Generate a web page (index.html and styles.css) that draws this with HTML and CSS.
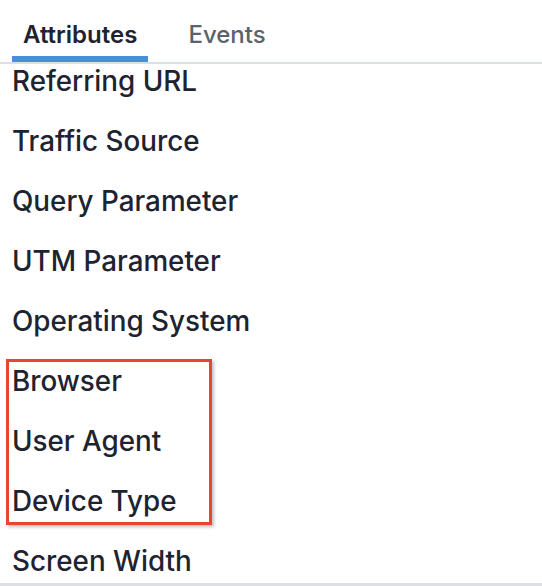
FILE: index.html
```html
<!DOCTYPE html>
<html>
<head>
<meta charset="utf-8">
<link rel="stylesheet" href="styles.css">
</head>
<body>
<div class="panel">
  <div class="tabs">
    <div class="tab active">Attributes</div>
    <div class="tab">Events</div>
  </div>
  <ul class="list">
    <li>Referring URL</li>
    <li>Traffic Source</li>
    <li>Query Parameter</li>
    <li>UTM Parameter</li>
    <li>Operating System</li>
    <li>Browser</li>
    <li>User Agent</li>
    <li>Device Type</li>
    <li>Screen Width</li>
  </ul>
  <div class="highlight"></div>
</div>
</body>
</html>
```
FILE: styles.css
```css
html, body {
  margin: 0;
  padding: 0;
  background: #ffffff;
}
body {
  font-family: Inter, "Noto Sans", sans-serif;
  color: #1e2330;
  width: 542px;
  height: 586px;
  overflow: hidden;
}
.panel {
  position: relative;
  height: 586px;
  display: flex;
  flex-direction: column;
}
.tabs {
  display: flex;
  gap: 29px;
  padding-left: 12px;
  border-bottom: 2px solid #dcdfe3;
  box-sizing: border-box;
  height: 64px;
}
.tab {
  font-size: 24px;
  font-weight: 500;
  color: #5b626c;
  padding: 20px 11px 0;
  line-height: 30px;
  box-sizing: border-box;
  height: 62px;
}
.tab.active {
  color: #1e2330;
  font-weight: 600;
  border-bottom: 6px solid #4a8ddd;
}
.list {
  list-style: none;
  margin: 0;
  padding: 1.5px 0 0 12px;
  flex: 1;
  display: flex;
  flex-direction: column;
  gap: 30px;
  border-bottom: 3px solid #dcdfe3;
}
.list li {
  font-size: 27.8px;
  font-weight: 500;
  line-height: 30px;
}
.highlight {
  position: absolute;
  left: 6px;
  top: 359px;
  width: 200px;
  height: 160px;
  border: 3px solid #e9442e;
  box-shadow: 2px 2px 3px rgba(0, 0, 0, 0.25);
}
```
